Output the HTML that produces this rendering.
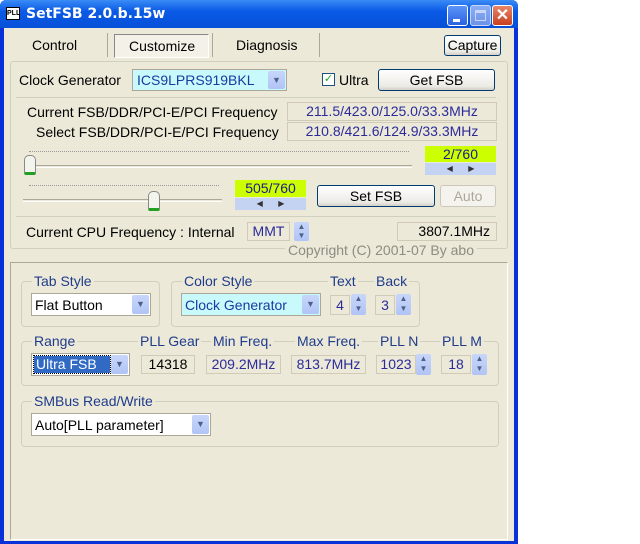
<!DOCTYPE html>
<html><head><style>
*{box-sizing:border-box;margin:0;padding:0}
body{width:640px;height:544px;background:#fff;position:relative;overflow:hidden;font-family:"Liberation Sans",Arial,sans-serif;font-size:14px;color:#000}
.a{position:absolute}
.win{left:0;top:0;width:518px;height:544px;background:#0831d9;border-radius:6px 6px 0 0}
.title{left:0;top:0;width:518px;height:28px;background:linear-gradient(#3a8cf5,#0a5ae6 40%,#0750d8);border-radius:6px 6px 0 0}
.body{left:4px;top:28px;width:510px;height:513px;background:#ece9d8}
.t{position:absolute;white-space:nowrap}
.box{position:absolute;border:1px solid #aca899;background:#fff}
.fld{position:absolute;border:1px solid #cfcbb8;background:#ece9d8;color:#2b2b9a;text-align:center;white-space:nowrap}
.btn{position:absolute;border:1px solid #003c74;border-radius:3px;background:linear-gradient(#fff,#ecebe6 80%,#d6d0c5);text-align:center}
.grp{position:absolute;border:1px solid #d0d0bf;border-radius:4px}
.lbl{position:absolute;background:#ece9d8;color:#1f3c8c;padding:0 2px;white-space:nowrap}
.dd{position:absolute;width:17px;top:1px;bottom:1px;right:1px;background:linear-gradient(#c8d6fb,#b0c4f5);border-radius:2px;color:#4d6185;font-size:9px;text-align:center}
.sp{position:absolute;width:15px;background:linear-gradient(#c8d6fb,#b0c4f5);border-radius:2px;color:#4d6185;font-size:8px;text-align:center;line-height:10px}
.lime{position:absolute;background:#ccff00;color:#1a1a8c;text-align:center}
.arr{position:absolute;background:#c5d3f3;color:#333;font-size:8px;text-align:center;line-height:12px}
</style></head><body>
<div class="a win"></div>
<div class="a title"></div>
<div class="a" style="left:6px;top:7px;width:14px;height:13px;background:#fff;border:1px solid #000;font-size:7px;line-height:11px;text-align:center;font-weight:bold">PLL</div>
<div class="t" style="left:26px;top:6px;color:#fff;font-weight:bold;font-size:14px;font-family:'DejaVu Sans',sans-serif">SetFSB 2.0.b.15w</div>
<div class="a" style="left:447px;top:5px;width:21px;height:21px;border:1px solid #fff;border-radius:3px;background:linear-gradient(#5b94f8,#2a63e0)"><div class="a" style="left:5px;top:13px;width:7px;height:3px;background:#fff"></div></div>
<div class="a" style="left:470px;top:5px;width:21px;height:21px;border:1px solid #c9d6f7;border-radius:3px;background:linear-gradient(#8aaef4,#6b92ea)"><div class="a" style="left:4px;top:4px;width:11px;height:11px;border:1px solid #c9d6f7;border-top-width:3px"></div></div>
<div class="a" style="left:492px;top:5px;width:21px;height:21px;border:1px solid #fff;border-radius:3px;background:linear-gradient(#e8866a,#c8401e);color:#fff;font-size:16px;font-weight:bold;text-align:center;line-height:19px">✕</div>
<div class="a body"></div>

<!-- tabs -->
<div class="t" style="left:32px;top:37px">Control</div>
<div class="a" style="left:107px;top:33px;width:1px;height:24px;background:#aca899"></div>
<div class="a" style="left:114px;top:34px;width:95px;height:24px;border:1px solid #888;border-right-color:#fff;border-bottom-color:#fff;background:#f4f2e8"></div>
<div class="t" style="left:129px;top:38px">Customize</div>
<div class="a" style="left:212px;top:33px;width:1px;height:24px;background:#aca899"></div>
<div class="t" style="left:236px;top:37px">Diagnosis</div>
<div class="a" style="left:319px;top:33px;width:1px;height:24px;background:#aca899"></div>
<div class="btn" style="left:444px;top:35px;width:57px;height:21px;line-height:19px">Capture</div>

<!-- top panel -->
<div class="a" style="left:10px;top:61px;width:498px;height:188px;border:1px solid #d0d0bf;border-radius:3px"></div>
<div class="t" style="left:19px;top:72px">Clock Generator</div>
<div class="box" style="left:132px;top:69px;width:155px;height:22px;background:#c8fafc;color:#1a3aa0;padding:2px 4px">ICS9LPRS919BKL<div class="dd" style="line-height:18px">&#9660;</div></div>
<div class="a" style="left:322px;top:73px;width:13px;height:13px;border:1px solid #1c5180;background:#fff;color:#21a121;font-size:11px;line-height:11px;text-align:center">✓</div>
<div class="t" style="left:339px;top:72px">Ultra</div>
<div class="btn" style="left:378px;top:69px;width:117px;height:22px;line-height:20px">Get FSB</div>
<div class="a" style="left:16px;top:97px;width:480px;height:1px;background:#d0d0bf"></div>
<div class="t" style="left:27px;top:104px">Current FSB/DDR/PCI-E/PCI Frequency</div>
<div class="fld" style="left:287px;top:102px;width:210px;height:19px;line-height:17px">211.5/423.0/125.0/33.3MHz</div>
<div class="t" style="left:36px;top:124px">Select FSB/DDR/PCI-E/PCI Frequency</div>
<div class="fld" style="left:287px;top:122px;width:210px;height:19px;line-height:17px">210.8/421.6/124.9/33.3MHz</div>

<!-- slider 1 -->
<div class="a" style="left:29px;top:151px;width:380px;height:1px;border-top:1px dotted #999"></div>
<div class="a" style="left:27px;top:165px;width:385px;height:3px;border-top:1px solid #aca899;border-bottom:1px solid #fff"></div>
<div class="a" style="left:24px;top:155px;width:12px;height:20px;background:#f4f4ee;border:1px solid #888;border-radius:5px 5px 2px 2px;border-bottom:3px solid #21a121"></div>
<div class="lime" style="left:425px;top:146px;width:71px;height:16px;line-height:16px">2/760</div>
<div class="arr" style="left:425px;top:163px;width:71px;height:12px">&#9664;&nbsp;&nbsp;&nbsp;&nbsp;&nbsp;&nbsp;&nbsp;&#9654;</div>

<!-- slider 2 -->
<div class="a" style="left:29px;top:185px;width:190px;height:1px;border-top:1px dotted #999"></div>
<div class="a" style="left:23px;top:199px;width:199px;height:3px;border-top:1px solid #aca899;border-bottom:1px solid #fff"></div>
<div class="a" style="left:148px;top:191px;width:12px;height:20px;background:#f4f4ee;border:1px solid #888;border-radius:5px 5px 2px 2px;border-bottom:3px solid #21a121"></div>
<div class="lime" style="left:235px;top:180px;width:71px;height:17px;line-height:17px">505/760</div>
<div class="arr" style="left:235px;top:198px;width:71px;height:12px">&#9664;&nbsp;&nbsp;&nbsp;&nbsp;&nbsp;&nbsp;&nbsp;&#9654;</div>
<div class="btn" style="left:317px;top:185px;width:118px;height:22px;line-height:20px">Set FSB</div>
<div class="a" style="left:440px;top:185px;width:56px;height:22px;border:1px solid #cac8bb;border-radius:3px;color:#aca899;text-align:center;line-height:20px;background:#f4f3ee">Auto</div>
<div class="a" style="left:16px;top:216px;width:480px;height:1px;background:#d0d0bf"></div>
<div class="t" style="left:26px;top:224px">Current CPU Frequency : Internal</div>
<div class="fld" style="left:247px;top:222px;width:43px;height:19px;line-height:17px">MMT</div>
<div class="sp" style="left:294px;top:222px;height:19px;line-height:9px">&#9650;<br>&#9660;</div>
<div class="fld" style="left:397px;top:222px;width:100px;height:19px;line-height:17px;color:#000;text-align:right;padding-right:6px">3807.1MHz</div>
<div class="t" style="left:285px;top:242px;color:#8c8c80;background:#ece9d8;padding:0 3px">Copyright (C) 2001-07 By abo</div>

<!-- bottom panel -->
<div class="a" style="left:10px;top:262px;width:498px;height:278px;border:1px solid #aca899;border-right-color:#fff;border-bottom-color:#fff"></div>

<div class="grp" style="left:21px;top:281px;width:139px;height:46px"></div>
<div class="lbl" style="left:32px;top:273px">Tab Style</div>
<div class="box" style="left:31px;top:293px;width:120px;height:23px;padding:3px 3px">Flat Button<div class="dd" style="line-height:19px">&#9660;</div></div>

<div class="grp" style="left:171px;top:281px;width:249px;height:46px"></div>
<div class="lbl" style="left:182px;top:273px">Color Style</div>
<div class="lbl" style="left:328px;top:273px">Text</div>
<div class="lbl" style="left:374px;top:273px">Back</div>
<div class="box" style="left:181px;top:293px;width:140px;height:23px;background:#c8fafc;color:#1a3aa0;padding:3px 3px">Clock Generator<div class="dd" style="line-height:19px">&#9660;</div></div>
<div class="fld" style="left:330px;top:295px;width:20px;height:20px;line-height:18px">4</div>
<div class="sp" style="left:351px;top:294px;height:21px">&#9650;<br>&#9660;</div>
<div class="fld" style="left:375px;top:295px;width:20px;height:20px;line-height:18px">3</div>
<div class="sp" style="left:396px;top:294px;height:21px">&#9650;<br>&#9660;</div>

<div class="grp" style="left:21px;top:341px;width:478px;height:45px"></div>
<div class="lbl" style="left:32px;top:333px">Range</div>
<div class="lbl" style="left:138px;top:333px">PLL Gear</div>
<div class="lbl" style="left:211px;top:333px">Min Freq.</div>
<div class="lbl" style="left:295px;top:333px">Max Freq.</div>
<div class="lbl" style="left:378px;top:333px">PLL N</div>
<div class="lbl" style="left:440px;top:333px">PLL M</div>
<div class="box" style="left:31px;top:353px;width:99px;height:23px"><div class="a" style="left:2px;top:2px;width:76px;height:17px;background:#316ac5;color:#fff;padding-left:2px;line-height:17px;outline:1px dotted #000">Ultra FSB</div><div class="dd" style="line-height:19px">&#9660;</div></div>
<div class="fld" style="left:141px;top:355px;width:54px;height:19px;line-height:17px;color:#000">14318</div>
<div class="fld" style="left:206px;top:355px;width:75px;height:19px;line-height:17px">209.2MHz</div>
<div class="fld" style="left:291px;top:355px;width:75px;height:19px;line-height:17px">813.7MHz</div>
<div class="fld" style="left:376px;top:355px;width:40px;height:19px;line-height:17px">1023</div>
<div class="sp" style="left:416px;top:354px;height:21px">&#9650;<br>&#9660;</div>
<div class="fld" style="left:441px;top:355px;width:30px;height:19px;line-height:17px">18</div>
<div class="sp" style="left:472px;top:354px;height:21px">&#9650;<br>&#9660;</div>

<div class="grp" style="left:21px;top:401px;width:478px;height:46px"></div>
<div class="lbl" style="left:32px;top:393px">SMBus Read/Write</div>
<div class="box" style="left:31px;top:413px;width:180px;height:23px;padding:3px 3px">Auto[PLL parameter]<div class="dd" style="line-height:19px">&#9660;</div></div>
</body></html>
